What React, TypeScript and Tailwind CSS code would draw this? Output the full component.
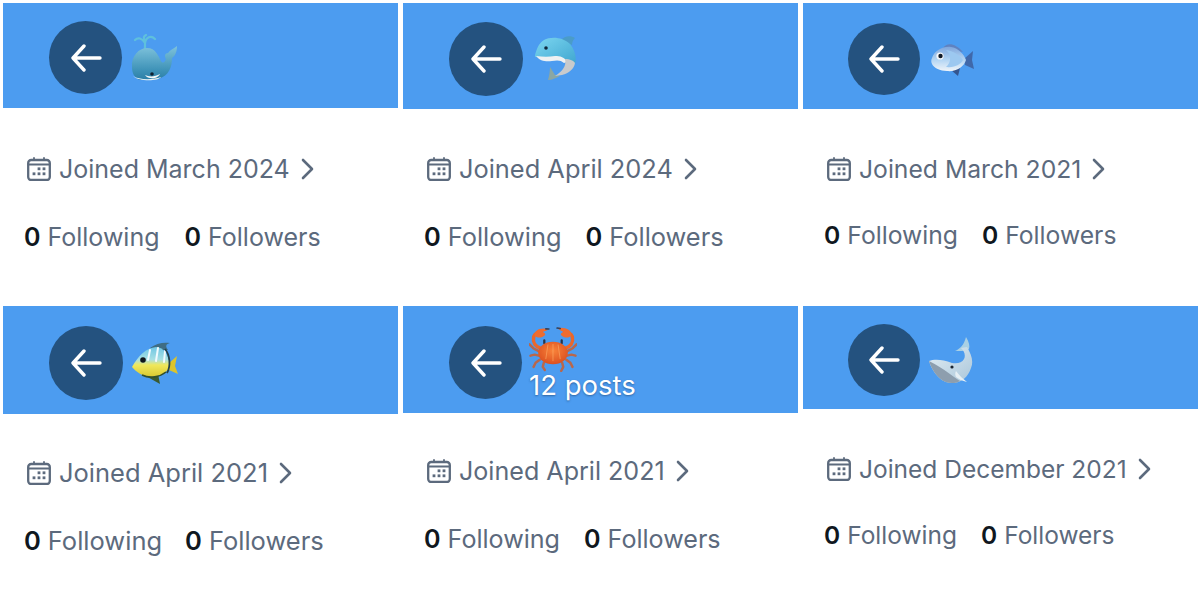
import type { ReactNode } from "react";

// each emoji is a small inline drawing, the viewBox is the size in px
function Whale() {
  return (
    <svg viewBox="0 0 47 48" className="h-[48px] w-[47px] shrink-0 blur-[0.3px]">
      <defs>
        <linearGradient id="wh" x1="0" y1="0" x2="0" y2="1">
          <stop offset="0" stopColor="#7fc3dc" />
          <stop offset="0.7" stopColor="#3f93b8" />
          <stop offset="1" stopColor="#2b7ea6" />
        </linearGradient>
      </defs>
      <path d="M14 16V8M14 9C11 4 7 3 4 6M14 9C15 3 20 1 24 5M14 8C12 3 13 2 15 1" stroke="#5fc0dc" strokeWidth="2.2" fill="none" strokeLinecap="round" />
      <path d="M1 33C0 22 8 14 16 14C25 14 27 22 30 27C32 30 34 28 35 25C33 22 34 19 37 19C39 16 42 15 46 12C46 18 44 22 41 24C41 33 38 42 27 45L9 46C4 44 1 40 1 33Z" fill="url(#wh)" />
      <path d="M2 42C8 46 22 46 30 43C28 47 8 48 2 42Z" fill="#e8f2f4" />
      <path d="M14 41C18 43 24 43 29 40C27 45 17 46 14 41Z" fill="#f4f7f7" />
      <circle cx="21" cy="40" r="1.8" fill="#0d2030" />
    </svg>
  );
}

function Dolphin() {
  return (
    <svg viewBox="0 0 41 46" className="h-[46px] w-[41px] shrink-0 blur-[0.3px]">
      <defs>
        <linearGradient id="do" x1="0" y1="0" x2="1" y2="1">
          <stop offset="0" stopColor="#7cd6f0" />
          <stop offset="1" stopColor="#3fa6d0" />
        </linearGradient>
      </defs>
      <path d="M26 4C29 0 36 -1 40 2C38 4 37 6 37 9Z" fill="#4a9cc8" />
      <path d="M20 39L15 31C15 36 14 40 13 44C17 44 21 42 25 40Z" fill="#8ba7a2" />
      <path d="M0 19C2 12 4 7 9 4C16 0 28 1 35 8C40 14 42 22 40 28C37 24 33 23 30 23C22 20 12 23 0 21Z" fill="url(#do)" />
      <path d="M1 20C8 21 14 21 20 20C25 20 30 21 32 26L29 27C26 24 22 24 17 25C11 26 5 25 1 20Z" fill="#eef1f2" />
      <path d="M30 23C35 23 39 25 40 27C39 33 34 37 27 39L20 40C26 36 32 31 30 23Z" fill="#c8cacc" />
      <circle cx="11" cy="12" r="1.8" fill="#10283c" />
    </svg>
  );
}

function Fish() {
  return (
    <svg viewBox="0 0 43 35" className="h-[35px] w-[43px] shrink-0 blur-[0.3px]">
      <defs>
        <linearGradient id="fi" x1="0" y1="0" x2="0" y2="1">
          <stop offset="0" stopColor="#7fa6dc" />
          <stop offset="0.55" stopColor="#b4d6f4" />
          <stop offset="1" stopColor="#f0f4f8" />
        </linearGradient>
      </defs>
      <path d="M12 6C16 0 24 1 32 10L22 8Z" fill="#5f82c0" />
      <path d="M20 28L27 34L29 26Z" fill="#34558f" />
      <path d="M33 17L42 9L41 18L43 27L34 23Z" fill="#3f68aa" />
      <path d="M1 16C4 8 12 4 20 5C27 6 33 12 35 18C33 25 25 30 16 29C9 29 3 26 1 22C0 20 0 18 1 16Z" fill="url(#fi)" />
      <path d="M15 8C20 12 21 20 15 25C24 26 30 22 32 18C29 13 22 9 15 8Z" fill="#9cc8f0" />
      <circle cx="9" cy="14" r="3.6" fill="#f5f7fa" />
      <circle cx="9.5" cy="14" r="2.2" fill="#101a28" />
    </svg>
  );
}

function Tropical() {
  return (
    <svg viewBox="0 0 46 43" className="h-[43px] w-[46px] shrink-0 blur-[0.3px]">
      <defs>
        <linearGradient id="tr" x1="0" y1="0" x2="0" y2="1">
          <stop offset="0" stopColor="#6fc6e4" />
          <stop offset="0.42" stopColor="#a8e0e4" />
          <stop offset="0.6" stopColor="#f0e85c" />
          <stop offset="1" stopColor="#d8c830" />
        </linearGradient>
      </defs>
      <path d="M18 6C24 1 32 0 38 1C34 2 33 4 36 8L22 8Z" fill="#3f6d84" />
      <path d="M12 33L28 42L26 32Z" fill="#3a5a30" />
      <path d="M36 22L45 14L43 24L46 32L37 28Z" fill="#dcc42c" />
      <path d="M0 25C6 14 14 6 24 5C32 5 37 14 38 24C36 30 28 35 18 35C10 34 4 30 0 25Z" fill="url(#tr)" />
      <path d="M18 8L16 18M26 6L24 19M33 9L32 20" stroke="#f2fbff" strokeWidth="2" strokeLinecap="round" />
      <path d="M33 7C38 13 39 24 35 31" stroke="#24424c" strokeWidth="1.8" fill="none" />
      <path d="M10 33C18 37 28 35 34 30" stroke="#33502c" strokeWidth="1.6" fill="none" />
      <circle cx="11" cy="18" r="2.8" fill="#10161c" />
    </svg>
  );
}

function Crab() {
  return (
    <svg viewBox="0 0 46 44" className="h-[45px] w-[48px] shrink-0 blur-[0.3px]">
      <defs>
        <radialGradient id="cr" cx="0.5" cy="0.4" r="0.65">
          <stop offset="0" stopColor="#f9833a" />
          <stop offset="1" stopColor="#d94c1e" />
        </radialGradient>
      </defs>
      <g stroke="#b8674c" strokeWidth="2.4" fill="none" strokeLinecap="round" strokeLinejoin="round">
        <path d="M10 24L4 21L0 17M9 28L5 27L1 28M10 32L6 35L4 39M14 35L13 39L15 42" />
        <path d="M36 24L42 21L46 17M37 28L41 27L45 28M36 32L40 35L42 39M32 35L33 39L31 43" />
      </g>
      <path d="M11 21C6 19 3 15 4 11C4 8 6 6 8 6" stroke="#e9672c" strokeWidth="3.4" fill="none" strokeLinecap="round" />
      <path d="M35 21C40 19 43 15 42 11C42 8 40 6 38 6" stroke="#e9672c" strokeWidth="3.4" fill="none" strokeLinecap="round" />
      <path d="M5 8C5 3 10 0 19 2C17 4 14 4 13 5C15 6 16 7 15 8C12 11 7 11 5 8Z" fill="#ee6c30" />
      <path d="M41 8C41 3 36 0 27 1C29 3 32 4 33 5C31 6 30 7 31 8C34 11 39 11 41 8Z" fill="#ee6c30" />
      <path d="M16 1.8L19 2M30 1.5L27 1" stroke="#31425e" strokeWidth="1.6" strokeLinecap="round" />
      <path d="M14.500 16V13M31.500 16V13" stroke="#27344a" strokeWidth="2.2" strokeLinecap="round" />
      <ellipse cx="23" cy="25.500" rx="14.500" ry="11" fill="url(#cr)" />
      <path d="M23 17V33M18 17.500L16 31M28 17.500L30 31" stroke="#fba864" strokeWidth="0.9" strokeLinecap="round" opacity="0.7" />
    </svg>
  );
}

function GreyWhale() {
  return (
    <svg viewBox="0 0 47 47" className="h-[47px] w-[47px] shrink-0 blur-[0.3px]">
      <defs>
        <linearGradient id="gw" x1="0" y1="0" x2="1" y2="1">
          <stop offset="0" stopColor="#e4eef4" />
          <stop offset="1" stopColor="#a9c6da" />
        </linearGradient>
      </defs>
      <path d="M26 14C31 12 35 8 37 0C40 5 41 9 40 12C37 14 33 14 26 14Z" fill="#a9d0e4" />
      <path d="M0 24C5 22 13 22 23 26C28 27 33 26 35 22C37 18 35 14 32 11L38 10C42 17 45 24 42 31C39 40 33 45 25 46C15 47 8 40 4 33C2 30 1 27 0 24Z" fill="url(#gw)" />
      <path d="M0 24C1 27 2 30 4 33C8 40 15 47 25 46C27 46 29 45 31 44C24 40 16 32 0 24Z" fill="#8d9eae" />
      <path d="M27 34C30 38 34 42 38 45C33 44 30 42 27 40C26 38 26 36 27 34Z" fill="#e6eff4" />
      <circle cx="23" cy="30" r="1.6" fill="#1a2430" />
    </svg>
  );
}

function BackButton({ size }: { size: string }) {
  return (
    <div className={`flex shrink-0 items-center justify-center rounded-full bg-[#24527f] ${size}`}>
      <svg viewBox="0 0 32 28" className="h-[28px] w-[32px]" fill="none" stroke="#fff" strokeWidth="3.4" strokeLinecap="round" strokeLinejoin="round">
        <path d="M30 14H3M14 2L3 14L14 26" />
      </svg>
    </div>
  );
}

function CalendarIcon() {
  return (
    <svg viewBox="0 0 24 24" className="h-[24px] w-[24px] shrink-0" fill="none" stroke="#5c6a7d" strokeWidth="2.3" strokeLinecap="round">
      <rect x="1.200" y="3" width="21.600" height="20" rx="3" />
      <path d="M1.500 7.500H22.500M7 1V3M17 1V3" strokeWidth="1.800" />
      <g fill="#5c6a7d" stroke="none">
        <rect x="10.600" y="10.400" width="2.800" height="2.800" />
        <rect x="15.600" y="10.400" width="2.800" height="2.800" />
        <rect x="5.600" y="15.400" width="2.800" height="2.800" />
        <rect x="10.600" y="15.400" width="2.800" height="2.800" />
        <rect x="15.600" y="15.400" width="2.800" height="2.800" />
      </g>
    </svg>
  );
}

function Chevron() {
  return (
    <svg viewBox="0 0 13 22" className="h-[22px] w-[13px] shrink-0" fill="none" stroke="#5c6a7d" strokeWidth="2.6" strokeLinecap="round" strokeLinejoin="round">
      <path d="M2 2L11 11L2 20" />
    </svg>
  );
}

type Tile = {
  emoji: ReactNode;
  posts?: string;
  joined: string;
  head: string;
  circle: string;
  body: string;
  text: string;
  stats: string;
};

const tiles: Tile[] = [
  {
    emoji: <Whale />,
    joined: "Joined March 2024",
    head: "h-[105px] pl-[46px] pt-[18px] gap-[9px]",
    circle: "h-[73px] w-[73px]",
    body: "pt-[46px]",
    text: "text-[25px]",
    stats: "mt-[38px] gap-[25px]",
  },
  {
    emoji: <Dolphin />,
    joined: "Joined April 2024",
    head: "h-[106px] pl-[46px] pt-[19px] gap-[12px]",
    circle: "h-[74px] w-[74px]",
    body: "pt-[45px]",
    text: "text-[25.4px]",
    stats: "mt-[38px] gap-[24px]",
  },
  {
    emoji: <Fish />,
    joined: "Joined March 2021",
    head: "h-[106px] pl-[45px] pt-[20px] gap-[11px]",
    circle: "h-[72px] w-[72px]",
    body: "pt-[45px]",
    text: "text-[24.7px]",
    stats: "mt-[36px] gap-[24px]",
  },
  {
    emoji: <Tropical />,
    joined: "Joined April 2021",
    head: "h-[108px] pl-[46px] pt-[20px] gap-[9px]",
    circle: "h-[74px] w-[74px]",
    body: "pt-[44px]",
    text: "text-[25.5px]",
    stats: "mt-[38px] gap-[23px]",
  },
  {
    emoji: <Crab />,
    posts: "12 posts",
    joined: "Joined April 2021",
    head: "h-[107px] pl-[46px] pt-[20px] gap-[7px]",
    circle: "h-[73px] w-[73px]",
    body: "pt-[43px]",
    text: "text-[25.1px]",
    stats: "mt-[38px] gap-[24px]",
  },
  {
    emoji: <GreyWhale />,
    joined: "Joined December 2021",
    head: "h-[103px] pl-[45px] pt-[18px] gap-[9px]",
    circle: "h-[72px] w-[72px]",
    body: "pt-[45px]",
    text: "text-[24.5px]",
    stats: "mt-[36px] gap-[24px]",
  },
];

function ProfileTile({ tile }: { tile: Tile }) {
  return (
    <div className="flex flex-col">
      <div className={`flex items-start bg-[#4c9cf0] ${tile.head}`}>
        <BackButton size={tile.circle} />
        <div className={`flex flex-col ${tile.posts ? "" : "self-stretch justify-center pb-[13px]"}`}>
          <div className="flex h-[46px] items-center">{tile.emoji}</div>
          {tile.posts && (
            <p className="text-[27.5px] leading-[26px] text-white [text-shadow:0_1px_2px_rgba(20,50,90,0.5)]">
              {tile.posts}
            </p>
          )}
        </div>
      </div>
      <div className={`flex flex-col pl-[21px] ${tile.body} ${tile.text}`}>
        <div className="flex h-[30px] items-center pl-[3px] leading-[30px] text-[#5c6a7d]">
          <CalendarIcon />
          <span className="ml-[8px] mr-[11px]">{tile.joined}</span>
          <Chevron />
        </div>
        <div className={`flex h-[30px] items-center leading-[30px] ${tile.stats}`}>
          <span className="text-[#5c6a7d]">
            <b className="mr-[7px] font-semibold text-[#0f1720]">0</b>Following
          </span>
          <span className="text-[#5c6a7d]">
            <b className="mr-[7px] font-semibold text-[#0f1720]">0</b>Followers
          </span>
        </div>
      </div>
    </div>
  );
}

export default function App() {
  return (
    <div className="grid h-[605px] w-[1200px] grid-cols-[395px_395px_395px] grid-rows-[306px_299px] gap-x-[5px] overflow-hidden bg-white px-[3px] font-[Inter]">
      {tiles.map((tile, i) => (
        <div key={i} className={i < 3 ? "pt-[3px]" : ""}>
          <ProfileTile tile={tile} />
        </div>
      ))}
    </div>
  );
}
